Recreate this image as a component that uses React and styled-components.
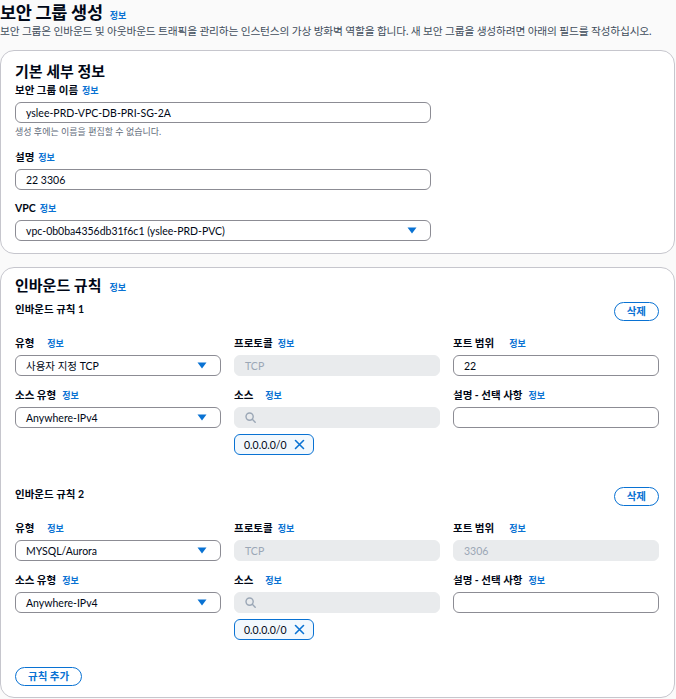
import React from 'react';
import styled, { createGlobalStyle } from 'styled-components';

const GlobalStyle = createGlobalStyle`
  body {
    margin: 0;
    background: #fafafa;
    font-family: "Lato", "Noto Sans CJK KR", sans-serif;
    color: #000716;
  }
`;

const Page = styled.div`
  width: 676px;
  height: 699px;
  padding-top: 2px;
  box-sizing: border-box;
  overflow: hidden;
`;

const TitleRow = styled.div`
  display: flex;
  align-items: baseline;
  gap: 7px;
  height: 22px;
`;

const PageTitle = styled.h1`
  margin: 0;
  font-size: 17.5px;
  font-weight: 700;
  line-height: 22px;
  letter-spacing: -0.3px;
`;

const Info = styled.a`
  color: #0972d3;
  font-size: 9px;
  font-weight: 700;
  margin-left: ${(p) => p.$gap ?? 4}px;
  text-decoration: none;
`;

const Desc = styled.p`
  margin: 0;
  font-size: 10.75px;
  line-height: 14px;
  color: #414d5c;
  letter-spacing: -0.2px;
  white-space: nowrap;
`;

const Panel = styled.section`
  background: #fff;
  border: 1px solid #c6c6cd;
  border-radius: 14px;
  width: 675px;
  box-sizing: border-box;
  padding: ${(p) => p.$pad};
  margin-top: ${(p) => p.$top}px;
`;

const PanelTitle = styled.h2`
  margin: 0;
  font-size: 15px;
  font-weight: 700;
  line-height: 20px;
  height: 20px;
  display: flex;
  align-items: baseline;
`;

const Field = styled.div`
  margin-top: ${(p) => p.$top || 0}px;
  width: ${(p) => p.$width || 'auto'};
`;

const Label = styled.div`
  font-size: 10.5px;
  font-weight: 700;
  line-height: 14px;
  height: 14px;
  display: flex;
  align-items: baseline;
  white-space: nowrap;
`;

const Box = styled.div`
  margin-top: 5px;
  height: 21px;
  box-sizing: border-box;
  border-radius: 6px;
  border: 1px solid ${(p) => (p.$disabled ? '#e9ebed' : '#8c8c94')};
  background: ${(p) => (p.$disabled ? '#e9ebed' : '#fff')};
  color: ${(p) => (p.$disabled ? '#9ba7b6' : '#000716')};
  font-size: 10.5px;
  display: flex;
  align-items: center;
  padding: 0 13px 0 ${(p) => p.$padLeft || 10}px;
  gap: 6px;
  white-space: nowrap;
`;

const BoxText = styled.span`
  flex: 1;
`;

const Hint = styled.div`
  margin-top: 3px;
  font-size: 9px;
  line-height: 12px;
  color: #5f6b7a;
`;

const RuleHeader = styled.div`
  display: flex;
  justify-content: space-between;
  align-items: flex-start;
  margin-top: ${(p) => p.$top}px;
`;

const RuleTitle = styled.div`
  font-size: 10.5px;
  font-weight: 700;
  line-height: 14px;
`;

const PillButton = styled.button`
  height: 19px;
  padding: 0 ${(p) => p.$px || 12}px;
  border: 1.5px solid #0972d3;
  border-radius: 10px;
  background: #fff;
  color: #0972d3;
  font-family: inherit;
  font-size: 10.5px;
  font-weight: 700;
  line-height: 1;
  margin-top: ${(p) => p.$top || 0}px;
  display: flex;
  align-items: center;
`;

const Grid = styled.div`
  display: grid;
  grid-template-columns: repeat(3, 206px);
  column-gap: 13px;
  row-gap: 12px;
  margin-top: 15px;
`;

const Token = styled.div`
  margin-top: 6px;
  width: 80px;
  height: 21px;
  box-sizing: border-box;
  border: 1px solid #0972d3;
  border-radius: 6px;
  background: #f2f8fd;
  display: flex;
  align-items: center;
  padding-left: 9px;
  gap: 7px;
  font-size: 10.5px;
`;

const Caret = () => (
  <svg width="10" height="7" viewBox="0 0 10 7">
    <path d="M0.5 0.5h9L5 6.5z" fill="#0972d3" />
  </svg>
);

const SearchIcon = () => (
  <svg width="11" height="11" viewBox="0 0 11 11" fill="none" stroke="#9ba7b6" strokeWidth="1.4">
    <circle cx="4.6" cy="4.6" r="3.6" />
    <path d="M7.3 7.3L10.2 10.2" strokeLinecap="round" />
  </svg>
);

const CloseIcon = () => (
  <svg width="11" height="11" viewBox="0 0 11 11" stroke="#0972d3" strokeWidth="1.6" strokeLinecap="round">
    <path d="M1.5 1.5l8 8M9.5 1.5l-8 8" />
  </svg>
);

const Select = ({ value }) => (
  <Box>
    <BoxText>{value}</BoxText>
    <Caret />
  </Box>
);

const Rule = ({ n, top, type, port, portDisabled }) => (
  <>
    <RuleHeader $top={top}>
      <RuleTitle>인바운드 규칙 {n}</RuleTitle>
      <PillButton>삭제</PillButton>
    </RuleHeader>
    <Grid>
      <Field>
        <Label>유형<Info $gap={13}>정보</Info></Label>
        <Select value={type} />
      </Field>
      <Field>
        <Label>프로토콜<Info $gap={5}>정보</Info></Label>
        <Box $disabled>TCP</Box>
      </Field>
      <Field>
        <Label>포트 범위<Info $gap={15}>정보</Info></Label>
        <Box $disabled={portDisabled}>{port}</Box>
      </Field>
      <Field>
        <Label>소스 유형<Info $gap={6}>정보</Info></Label>
        <Select value="Anywhere-IPv4" />
      </Field>
      <Field>
        <Label>소스<Info $gap={12}>정보</Info></Label>
        <Box $disabled>
          <SearchIcon />
        </Box>
        <Token>
          0.0.0.0/0
          <CloseIcon />
        </Token>
      </Field>
      <Field>
        <Label>설명 - 선택 사항<Info $gap={6}>정보</Info></Label>
        <Box />
      </Field>
    </Grid>
  </>
);

const App = () => (
  <Page>
    <GlobalStyle />
    <TitleRow>
      <PageTitle>보안 그룹 생성</PageTitle>
      <Info $gap={0}>정보</Info>
    </TitleRow>
    <Desc>
      보안 그룹은 인바운드 및 아웃바운드 트래픽을 관리하는 인스턴스의 가상 방화벽 역할을 합니다. 새 보안 그룹을 생성하려면 아래의 필드를 작성하십시오.
    </Desc>

    <Panel $top={12} $pad="10px 15px 12px 14px">
      <PanelTitle>기본 세부 정보</PanelTitle>
      <Field $top={2} $width="416px">
        <Label>보안 그룹 이름<Info>정보</Info></Label>
        <Box $padLeft={10}>yslee-PRD-VPC-DB-PRI-SG-2A</Box>
        <Hint>생성 후에는 이름을 편집할 수 없습니다.</Hint>
      </Field>
      <Field $top={12} $width="416px">
        <Label>설명<Info>정보</Info></Label>
        <Box>22 3306</Box>
      </Field>
      <Field $top={11} $width="416px">
        <Label>VPC<Info>정보</Info></Label>
        <Select value="vpc-0b0ba4356db31f6c1 (yslee-PRD-PVC)" />
      </Field>
    </Panel>

    <Panel $top={13} $pad="7px 15px 11px 14px">
      <PanelTitle>
        인바운드 규칙<Info $gap={8}>정보</Info>
      </PanelTitle>
      <Rule n={1} top={7} type="사용자 지정 TCP" port="22" />
      <Rule n={2} top={32} type="MYSQL/Aurora" port="3306" portDisabled />
      <PillButton $px={12} $top={27}>규칙 추가</PillButton>
    </Panel>
  </Page>
);

export default App;
